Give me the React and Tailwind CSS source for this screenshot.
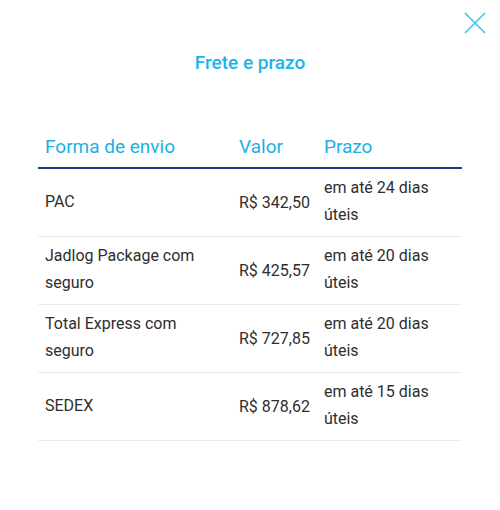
import React from "react";

const rows = [
  { name: "PAC", price: "R$ 342,50", days: "em até 24 dias úteis" },
  { name: "Jadlog Package com seguro", price: "R$ 425,57", days: "em até 20 dias úteis" },
  { name: "Total Express com seguro", price: "R$ 727,85", days: "em até 20 dias úteis" },
  { name: "SEDEX", price: "R$ 878,62", days: "em até 15 dias úteis" },
];

function CloseIcon() {
  return (
    <svg width="22" height="22" viewBox="0 0 22 22" fill="none">
      <path d="M1 1L21 21M21 1L1 21" stroke="#3cc4ea" strokeWidth="1.6" />
    </svg>
  );
}

export default function App() {
  return (
    <div
      className="relative w-[500px] h-[510px] bg-white"
      style={{ fontFamily: "Roboto, 'Noto Sans', sans-serif" }}
    >
      <button className="absolute top-[12px] right-[14px] p-0">
        <CloseIcon />
      </button>

      <h2 className="pt-[52px] text-center text-[19px] leading-[22px] font-medium text-[#1cb5e8]">
        Frete e prazo
      </h2>

      <table className="mx-[38px] mt-[54px] w-[424px] border-collapse">
        <thead>
          <tr className="border-b-2 border-[#1f3a80]">
            <th className="w-[194px] h-[40px] px-[7px] text-left text-[19px] font-normal text-[#1cb0e6]">
              Forma de envio
            </th>
            <th className="w-[84px] px-[7px] text-left text-[19px] font-normal text-[#1cb0e6]">Valor</th>
            <th className="px-[7px] text-left text-[19px] font-normal text-[#1cb0e6]">Prazo</th>
          </tr>
        </thead>
        <tbody>
          {rows.map((r) => (
            <tr key={r.name} className="border-b border-[#ebebeb] text-[16px] leading-[27px] text-[#2e2e2e]">
              <td className="h-[67px] px-[7px] pt-[5px] pb-[8px] align-middle">{r.name}</td>
              <td className="px-[7px] align-middle whitespace-nowrap">{r.price}</td>
              <td className="px-[7px] pt-[5px] pb-[8px] align-middle">{r.days}</td>
            </tr>
          ))}
        </tbody>
      </table>
    </div>
  );
}
